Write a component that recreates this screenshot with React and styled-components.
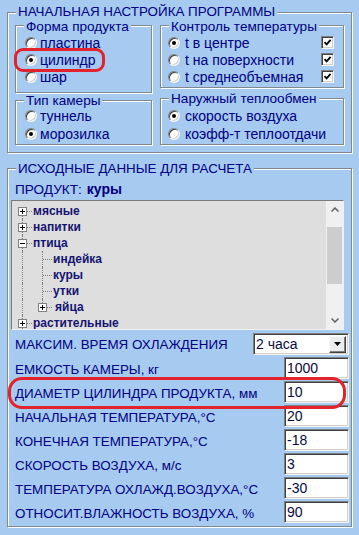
import React from "react";
import styled, { createGlobalStyle } from "styled-components";

const GlobalStyle = createGlobalStyle`
  body {
    margin: 0;
    background: #a6caf0;
    font-family: "Liberation Sans", Arial, sans-serif;
  }
`;

const NAVY = "#000080";
const BG = "#a6caf0";

const Window = styled.div`
  width: 359px;
  height: 535px;
  box-sizing: border-box;
  padding: 12px 0 0 7px;
  background: ${BG};
  overflow: hidden;
`;

// etched frame like a classic TGroupBox
const Group = styled.div`
  position: relative;
  box-sizing: border-box;
  width: ${(p) => p.$w}px;
  height: ${(p) => p.$h}px;
  margin-top: ${(p) => p.$mt || 0}px;
  padding: ${(p) => p.$pad || "0"};
  border: 1px solid #808890;
  box-shadow: inset 1px 1px 0 #fff, 1px 1px 0 #fff;
`;

const Legend = styled.span`
  position: absolute;
  top: ${(p) => p.$top || -7}px;
  left: 8px;
  padding: 0 2px;
  background: ${BG};
  color: ${NAVY};
  font-size: ${(p) => p.$size || 13.6}px;
  line-height: 13px;
  white-space: nowrap;
`;

const Columns = styled.div`
  display: flex;
  gap: 8px;
`;

const Column = styled.div`
  display: flex;
  flex-direction: column;
`;

const OptionRow = styled.div`
  position: relative;
  display: flex;
  align-items: center;
  height: ${(p) => p.$h}px;
  color: ${NAVY};
  font-size: 14px;
  white-space: nowrap;
`;

const RadioDot = styled.span`
  position: relative;
  flex: none;
  width: 12px;
  height: 12px;
  box-sizing: border-box;
  border-radius: 50%;
  background: #fff;
  border: 1px solid;
  border-color: #808080 #f4f4f4 #f4f4f4 #808080;
  box-shadow: inset 1px 1px 0 #404040, inset -1px -1px 0 #d4d0c8;
  margin-right: ${(p) => p.$gap}px;

  &::after {
    content: "";
    display: ${(p) => (p.$on ? "block" : "none")};
    position: absolute;
    left: 3px;
    top: 3px;
    width: 4px;
    height: 4px;
    border-radius: 50%;
    background: #000;
  }
`;

const CheckBox = styled.span`
  flex: none;
  margin-left: auto;
  width: 13px;
  height: 13px;
  box-sizing: border-box;
  background: #fff;
  border: 1px solid;
  border-color: #808080 #f4f4f4 #f4f4f4 #808080;
  box-shadow: inset 1px 1px 0 #404040, inset -1px -1px 0 #d4d0c8;
  display: flex;
  align-items: center;
  justify-content: center;
`;

const Mark = styled.span`
  position: absolute;
  pointer-events: none;
  z-index: 5;
  box-sizing: border-box;
  border: 3px solid #e3232b;
  left: ${(p) => p.$x}px;
  top: ${(p) => p.$y}px;
  width: ${(p) => p.$w}px;
  height: ${(p) => p.$h}px;
  border-radius: ${(p) => p.$r};
`;

const Product = styled.div`
  height: 16px;
  line-height: 16px;
  padding-left: 4px;
  color: ${NAVY};
  font-size: 13.6px;
  margin-bottom: 3px;

  b {
    font-weight: bold;
    font-size: 14px;
    margin-left: 5px;
  }
`;

const Tree = styled.div`
  display: flex;
  width: 333px;
  height: 130px;
  box-sizing: border-box;
  background: #dedede;
  border: 1px solid;
  border-color: #7a7a7a #f0f0f0 #f0f0f0 #7a7a7a;
  overflow: hidden;
`;

const TreeBody = styled.div`
  flex: 1;
  padding-top: 2px;
`;

const TreeRow = styled.div`
  display: flex;
  align-items: center;
  height: 16px;
`;

const Cell = styled.span`
  position: relative;
  flex: none;
  width: 20px;
  height: 16px;

  &::before {
    content: "";
    display: ${(p) => (p.$v ? "block" : "none")};
    position: absolute;
    left: 10px;
    top: ${(p) => (p.$first ? 8 : 0)}px;
    height: ${(p) => (p.$v === "top" ? 8 : 16)}px;
    border-left: 1px dotted #808080;
  }

  &::after {
    content: "";
    display: ${(p) => (p.$hz ? "block" : "none")};
    position: absolute;
    left: 11px;
    top: 8px;
    width: 9px;
    border-top: 1px dotted #808080;
  }
`;

const Expander = styled.svg`
  position: absolute;
  left: 6px;
  top: 4px;
  z-index: 1;
`;

const TreeLabel = styled.span`
  margin-left: ${(p) => p.$ml || 1}px;
  color: #141470;
  font-size: 12px;
  font-weight: bold;
  white-space: nowrap;
`;

const ScrollBar = styled.div`
  flex: none;
  width: 17px;
  background: #f0f0f0;
  display: flex;
  flex-direction: column;
  align-items: stretch;
`;

const ScrollButton = styled.div`
  height: 17px;
  display: flex;
  align-items: center;
  justify-content: center;
`;

const ScrollTrack = styled.div`
  flex: 1;
  padding: 9px 1px 28px;
  display: flex;
`;

const Thumb = styled.div`
  flex: 1;
  background: #cdcdcd;
`;

const Fields = styled.div`
  margin-top: 2px;
`;

const FieldRow = styled.div`
  position: relative;
  display: flex;
  align-items: center;
  height: 24px;
`;

const FieldLabel = styled.span`
  flex: 1;
  padding: ${(p) => (p.$first ? 0 : 3)}px 0 0 4px;
  color: ${NAVY};
  font-size: 13.4px;
  white-space: nowrap;
`;

const Edit = styled.div`
  box-sizing: border-box;
  width: ${(p) => p.$w}px;
  height: 22px;
  margin-right: 2px;
  background: #fff;
  border: 1px solid;
  border-color: #808080 #f4f4f4 #f4f4f4 #808080;
  box-shadow: inset 1px 1px 0 #404040, inset -1px -1px 0 #d4d0c8;
  display: flex;
  align-items: center;
  padding-left: 2px;
  font-size: 14px;
  color: #0a0a40;
`;

const ComboButton = styled.span`
  margin-left: auto;
  margin-right: 2px;
  width: 17px;
  height: 17px;
  box-sizing: border-box;
  background: #ececec;
  border: 1px solid;
  border-color: #f8f8f8 #404040 #404040 #f8f8f8;
  box-shadow: inset -1px -1px 0 #808080;
  display: flex;
  align-items: center;
  justify-content: center;
`;

const Radio = ({ on, gap = 3, children, h = 17, mark }) => (
  <OptionRow $h={h}>
    <RadioDot $on={on} $gap={gap} />
    {children}
    {mark}
  </OptionRow>
);

const Check = () => (
  <CheckBox>
    <svg width="9" height="9" viewBox="0 0 9 9">
      <path d="M1.5 4.2 L3.6 6.4 L7.6 1.8" fill="none" stroke="#000" strokeWidth="1.8" />
    </svg>
  </CheckBox>
);

const Box = ({ open }) => (
  <Expander width="9" height="9" viewBox="0 0 9 9">
    <rect x="0.5" y="0.5" width="8" height="8" fill="#fff" stroke="#808080" />
    <path d="M2 4.5 H7" stroke="#000" />
    {!open && <path d="M4.5 2 V7" stroke="#000" />}
  </Expander>
);

const tree = [
  { level: 0, text: "мясные", box: "+" },
  { level: 0, text: "напитки", box: "+" },
  { level: 0, text: "птица", box: "-" },
  { level: 1, text: "индейка" },
  { level: 1, text: "куры" },
  { level: 1, text: "утки" },
  { level: 1, text: "яйца", box: "+", last: true },
  { level: 0, text: "растительные", box: "+" },
];

const fields = [
  { label: "ЕМКОСТЬ КАМЕРЫ, кг", value: "1000" },
  { label: "ДИАМЕТР ЦИЛИНДРА ПРОДУКТА, мм", value: "10", mark: true },
  { label: "НАЧАЛЬНАЯ ТЕМПЕРАТУРА,°С", value: "20" },
  { label: "КОНЕЧНАЯ ТЕМПЕРАТУРА,°С", value: "-18" },
  { label: "СКОРОСТЬ ВОЗДУХА, м/с", value: "3" },
  { label: "ТЕМПЕРАТУРА ОХЛАЖД.ВОЗДУХА,°С", value: "-30" },
  { label: "ОТНОСИТ.ВЛАЖНОСТЬ ВОЗДУХА, %", value: "90" },
];

export default function App() {
  return (
    <Window>
      <GlobalStyle />
      <Group $w={345} $h={141} $pad="12px 0 0 7px">
        <Legend $size={13.4} $top={-8}>НАЧАЛЬНАЯ НАСТРОЙКА ПРОГРАММЫ</Legend>
        <Columns>
          <Column>
            <Group $w={137} $h={68} $pad="8px 0 0 9px">
              <Legend $top={-6}>Форма продукта</Legend>
              <Radio>пластина</Radio>
              <Radio
                on
                mark={<Mark $x={-11} $y={-3} $w={91} $h={24} $r="9px" />}
              >
                цилиндр
              </Radio>
              <Radio>шар</Radio>
            </Group>
            <Group $w={137} $h={45} $mt={7} $pad="6px 0 0 9px">
              <Legend>Тип камеры</Legend>
              <Radio h={18}>туннель</Radio>
              <Radio h={18} on>морозилка</Radio>
            </Group>
          </Column>
          <Column>
            <Group $w={184} $h={63} $pad="8px 9px 0 7px">
              <Legend $top={-6}>Контроль температуры</Legend>
              <Radio on gap={5}>
                t в центре
                <Check />
              </Radio>
              <Radio gap={5}>
                t на поверхности
                <Check />
              </Radio>
              <Radio gap={5}>
                t среднеобъемная
                <Check />
              </Radio>
            </Group>
            <Group $w={184} $h={47} $mt={10} $pad="8px 0 0 7px">
              <Legend>Наружный теплообмен</Legend>
              <Radio h={18} on gap={5}>скорость воздуха</Radio>
              <Radio h={18} gap={5}>коэфф-т теплоотдачи</Radio>
            </Group>
          </Column>
        </Columns>
      </Group>

      <Group $w={345} $h={359} $mt={15} $pad="12px 0 0 3px">
        <Legend $size={13.4}>ИСХОДНЫЕ ДАННЫЕ ДЛЯ РАСЧЕТА</Legend>
        <Product>
          ПРОДУКТ:<b>куры</b>
        </Product>
        <Tree>
          <TreeBody>
            {tree.map((n, i) => (
              <TreeRow key={n.text}>
                <Cell $v $first={i === 0} $hz={n.level === 0}>
                  {n.level === 0 && <Box open={n.box === "-"} />}
                </Cell>
                {n.level === 1 && (
                  <Cell $v={n.last ? "top" : true} $hz>
                    {n.box && <Box />}
                  </Cell>
                )}
                <TreeLabel $ml={n.box && n.level === 1 ? 3 : 1}>{n.text}</TreeLabel>
              </TreeRow>
            ))}
          </TreeBody>
          <ScrollBar>
            <ScrollButton>
              <svg width="8" height="5" viewBox="0 0 8 5">
                <path d="M0.5 4.5 L4 1 L7.5 4.5" fill="none" stroke="#606060" strokeWidth="1.5" />
              </svg>
            </ScrollButton>
            <ScrollTrack>
              <Thumb />
            </ScrollTrack>
            <ScrollButton>
              <svg width="8" height="5" viewBox="0 0 8 5">
                <path d="M0.5 0.5 L4 4 L7.5 0.5" fill="none" stroke="#606060" strokeWidth="1.5" />
              </svg>
            </ScrollButton>
          </ScrollBar>
        </Tree>

        <Fields>
          <FieldRow>
            <FieldLabel $first>МАКСИМ. ВРЕМЯ ОХЛАЖДЕНИЯ</FieldLabel>
            <Edit $w={96}>
              2 часа
              <ComboButton>
                <svg width="7" height="4" viewBox="0 0 7 4">
                  <path d="M0 0 H7 L3.5 4 Z" fill="#000" />
                </svg>
              </ComboButton>
            </Edit>
          </FieldRow>
          {fields.map((f) => (
            <FieldRow key={f.label}>
              <FieldLabel>{f.label}</FieldLabel>
              <Edit $w={65}>{f.value}</Edit>
              {f.mark && <Mark $x={-3} $y={-3} $w={338} $h={32} $r="14px" />}
            </FieldRow>
          ))}
        </Fields>
      </Group>
    </Window>
  );
}
